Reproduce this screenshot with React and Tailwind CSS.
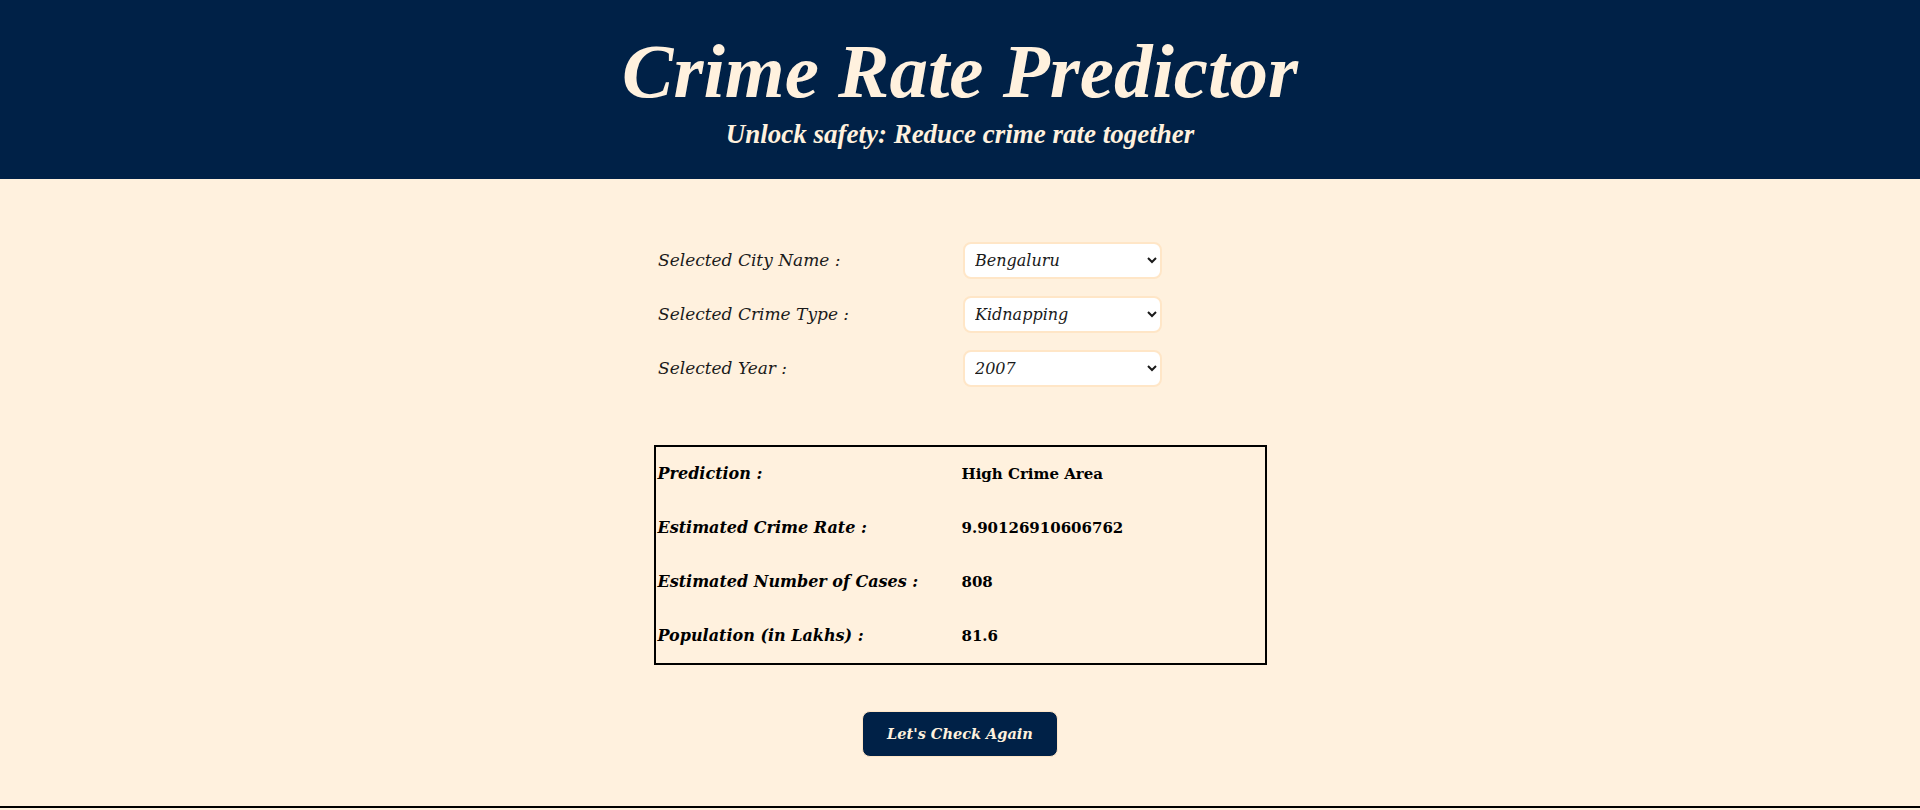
import React from "react";

function Row({ label, value }) {
  return (
    <div className="flex h-[37px] items-center">
      <div className="w-[309px] pl-[4px] text-[17px] italic text-[#1a1a1a]">{label}</div>
      <div className="relative">
        <select
          defaultValue={value}
          className="h-[37px] w-[199px] rounded-lg border-2 border-[#ffe6c7] bg-white pl-[6px] text-[16px] italic text-[#1a1a1a] outline-none"
        >
          <option value={value}>{value}</option>
        </select>
      </div>
    </div>
  );
}

function Result({ label, value }) {
  return (
    <div className="flex h-[54px] items-center">
      <div className="w-[306px] pl-[2px] text-[16px] font-bold italic text-black">{label}</div>
      <div className="text-[15px] font-bold text-black">{value}</div>
    </div>
  );
}

export default function App() {
  return (
    <div className="min-h-screen bg-[#fff1de] font-['DejaVu_Serif',serif]">
      <header className="flex h-[179px] flex-col items-center bg-[#002147] pt-[31px] font-['Liberation_Serif',serif] text-[#fff1de]">
        <h1 className="text-[77px] font-bold italic leading-[80px]">Crime Rate Predictor</h1>
        <p className="mt-[8px] text-[27px] font-bold italic leading-[30px]">
          Unlock safety: Reduce crime rate together
        </p>
      </header>
      <main className="flex flex-col items-center border-b-2 border-black pb-[49px] pt-[63px]">
        <div className="flex w-[612px] flex-col gap-[17px]">
          <Row label="Selected City Name :" value="Bengaluru" />
          <Row label="Selected Crime Type :" value="Kidnapping" />
          <Row label="Selected Year :" value="2007" />
        </div>
        <div className="mt-[58px] w-[613px] border-2 border-black">
          <Result label="Prediction :" value="High Crime Area" />
          <Result label="Estimated Crime Rate :" value="9.90126910606762" />
          <Result label="Estimated Number of Cases :" value="808" />
          <Result label="Population (in Lakhs) :" value="81.6" />
        </div>
        <button className="mt-[46px] h-[46px] w-[196px] rounded-lg border border-[#ffe6c7] bg-[#002147] text-[14.5px] font-bold italic text-[#fff1de]">
          Let's Check Again
        </button>
      </main>
    </div>
  );
}
